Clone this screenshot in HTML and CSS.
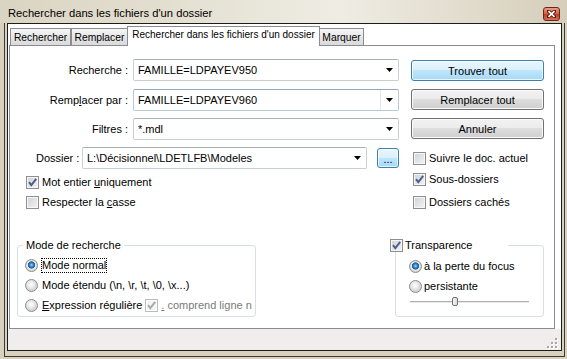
FILE: index.html
```html
<!DOCTYPE html>
<html lang="fr">
<head>
<meta charset="utf-8">
<title>Rechercher dans les fichiers d'un dossier</title>
<link rel="stylesheet" href="styles.css">
</head>
<body>
<div class="titlebar">
  <span class="title">Rechercher dans les fichiers d'un dossier</span>
  <span class="close"><svg width="9" height="8" viewBox="0 0 9 8"><path d="M1.5 1.2L7.5 6.8M7.5 1.2L1.5 6.8" stroke="#5a1a10" stroke-width="3.4" stroke-linecap="square"/><path d="M1.5 1.2L7.5 6.8M7.5 1.2L1.5 6.8" stroke="#fff" stroke-width="1.7"/></svg></span>
</div>
<div class="frame">
  <div class="client">
    <div class="tabs">
      <div class="tab t1">Rechercher</div>
      <div class="tab t2">Remplacer</div>
      <div class="tab active">Rechercher dans les fichiers d'un dossier</div>
      <div class="tab t4">Marquer</div>
    </div>
    <div class="panel">
      <div class="top">
        <div class="left">
          <div class="row r1">
            <span class="lbl">Recherche :</span>
            <div class="combo wide"><span>FAMILLE=LDPAYEV950</span><svg class="arrow" width="7" height="4" viewBox="0 0 7 4"><path d="M0 0H7L3.5 4z"/></svg></div>
          </div>
          <div class="row r2">
            <span class="lbl">Remp<u>l</u>acer par :</span>
            <div class="combo wide hover"><span>FAMILLE=LDPAYEV960</span><span class="sep"></span><svg class="arrow" width="7" height="4" viewBox="0 0 7 4"><path d="M0 0H7L3.5 4z"/></svg></div>
          </div>
          <div class="row r3">
            <span class="lbl">Filtres :</span>
            <div class="combo wide"><span>*.mdl</span><svg class="arrow" width="7" height="4" viewBox="0 0 7 4"><path d="M0 0H7L3.5 4z"/></svg></div>
          </div>
          <div class="row r4">
            <span class="lbl2">Dossier :</span>
            <div class="combo folder"><span>L:\Décisionnel\LDETLFB\Modeles</span><svg class="arrow" width="7" height="4" viewBox="0 0 7 4"><path d="M0 0H7L3.5 4z"/></svg></div>
            <span class="browse">...</span>
          </div>
          <div class="chk c1"><span class="cb"><svg width="11" height="11" viewBox="0 0 11 11"><path d="M2 5.2L4.3 8.2L9.2 1.8" fill="none" stroke="#4a5d8f" stroke-width="1.9"/></svg></span><span>Mot entier <u>u</u>niquement</span></div>
          <div class="chk c2"><span class="cb"></span><span>Respecter la <u>c</u>asse</span></div>
        </div>
        <div class="right">
          <div class="btn focus b1">Trouver tout</div>
          <div class="btn b2">Remplacer tout</div>
          <div class="btn b3">Annuler</div>
          <div class="chk rc1"><span class="cb"></span><span>Suivre le doc. actuel</span></div>
          <div class="chk rc2"><span class="cb"><svg width="11" height="11" viewBox="0 0 11 11"><path d="M2 5.2L4.3 8.2L9.2 1.8" fill="none" stroke="#4a5d8f" stroke-width="1.9"/></svg></span><span>Sous-dossiers</span></div>
          <div class="chk rc3"><span class="cb"></span><span>Dossiers cachés</span></div>
        </div>
      </div>
      <div class="bottom">
        <fieldset class="grp mode">
          <legend>Mode de recherche</legend>
          <div class="opt o1"><span class="rb on"></span><span class="focusbox">Mode normal</span></div>
          <div class="opt o2"><span class="rb"></span><span>Mode étendu (\n, \r, \t, \0, \x...)</span></div>
          <div class="opt o3"><span class="rb"></span><span class="regex"><u>E</u>xpression régulière</span><span class="cb dis"><svg width="11" height="11" viewBox="0 0 11 11"><path d="M2 5.2L4.3 8.2L9.2 1.8" fill="none" stroke="#a9a9a9" stroke-width="1.9"/></svg></span><span class="distext"><u>.</u> comprend ligne n</span></div>
        </fieldset>
        <fieldset class="grp transp">
          <legend><span class="cb"><svg width="11" height="11" viewBox="0 0 11 11"><path d="M2 5.2L4.3 8.2L9.2 1.8" fill="none" stroke="#4a5d8f" stroke-width="1.9"/></svg></span><span>Transparence</span></legend>
          <div class="opt t1o"><span class="rb on"></span><span>à la perte du focus</span></div>
          <div class="opt t2o"><span class="rb"></span><span>persistante</span></div>
          <div class="slider"><span class="track"></span><span class="thumb"></span></div>
        </fieldset>
      </div>
    </div>
    <div class="status">
      <svg class="grip" width="11" height="11" viewBox="0 0 11 11">
        <g fill="#fff"><rect x="9" y="1" width="2" height="2"/><rect x="5" y="5" width="2" height="2"/><rect x="9" y="5" width="2" height="2"/><rect x="1" y="9" width="2" height="2"/><rect x="5" y="9" width="2" height="2"/><rect x="9" y="9" width="2" height="2"/></g>
        <g fill="#aaa6a6"><rect x="8" y="0" width="2" height="2"/><rect x="4" y="4" width="2" height="2"/><rect x="8" y="4" width="2" height="2"/><rect x="0" y="8" width="2" height="2"/><rect x="4" y="8" width="2" height="2"/><rect x="8" y="8" width="2" height="2"/></g>
      </svg>
    </div>
  </div>
</div>
</body>
</html>
```
FILE: styles.css
```css
* { box-sizing: border-box; }
body {
  margin: 0;
  width: 567px;
  height: 359px;
  overflow: hidden;
  background: #d8d1bd;
  font-family: "Liberation Sans", Arial, sans-serif;
  font-size: 11px;
  line-height: 14px;
  color: #000;
}
u { text-decoration: underline; text-underline-offset: 1px; }

.titlebar {
  height: 23px;
  display: flex;
  background: linear-gradient(to right, #dad4c2 0%, #e3dfd0 30%, #efece4 60%, #e4dfd1 78%, #d5cebb 100%);
}
.title {
  font-size: 11.2px;
  line-height: 18px;
  padding: 4px 0 0 8px;
  white-space: nowrap;
}
.close {
  margin: 7px 7px 0 auto;
  width: 17px;
  height: 14px;
  border: 1px solid #6e2416;
  border-radius: 3px;
  background: linear-gradient(#e8a08b, #d65d41 48%, #c23c20 52%, #d9714f);
  display: flex;
  align-items: center;
  justify-content: center;
}

.frame {
  margin-left: 4px;
  width: 561px;
  height: 334px;
  border: 1px solid #3a3a3a;
  border-top: 0;
  padding: 0 2px 5px 2px;
}
.client {
  width: 555px;
  height: 328px;
  border: 1px solid #1c1c1c;
  background: #fff;
  display: flex;
  flex-direction: column;
}

/* tabs */
.tabs {
  height: 21px;
  display: flex;
  align-items: flex-end;
  padding: 2px 0 0 2px;
}
.tab {
  height: 17px;
  border: 1px solid #898c95;
  border-bottom: 0;
  background: linear-gradient(#f6f6f6, #e6e6e6 50%, #dadada);
  text-align: center;
  padding-top: 2px;
  white-space: nowrap;
  font-size: 10.3px;
  overflow: hidden;
}
.t1 { width: 61px; }
.t2 { width: 57px; }
.tab.active {
  width: 193px;
  height: 20px;
  margin-left: -1px;
  margin-bottom: -1px;
  background: #fff;
  position: relative;
  z-index: 1;
  padding-top: 1px;
  font-size: 10px;
}
.t4 { width: 45px; margin-left: -1px; }

.panel {
  margin-left: 1px;
  width: 546px;
  height: 284px;
  border: 1px solid #898c95;
  background: #fff;
}

.status {
  flex: 1;
  background: #f0eded;
  display: flex;
  justify-content: flex-end;
  align-items: flex-end;
  padding: 0 3px 1px 0;
}

/* top area */
.top { display: flex; margin-top: 13px; }
.left { width: 389px; }
.row { display: flex; align-items: center; height: 22px; }
.r2 { margin-top: 8px; }
.r3 { margin-top: 7px; }
.r4 { margin-top: 7px; padding-left: 26px; }
.lbl { width: 118px; text-align: right; margin-right: 5px; white-space: nowrap; }
.lbl2 { width: 46px; }

.combo {
  height: 22px;
  border: 1px solid #c9ced6;
  border-top-color: #abb0b8;
  border-radius: 2px;
  background: #fff;
  display: flex;
  align-items: center;
  padding: 0 5px 0 4px;
  white-space: nowrap;
}
.combo > span:first-child { flex: 1; overflow: hidden; }
.combo.wide { width: 266px; }
.combo.folder { width: 285px; }
.combo.hover { border-color: #b7c9db; border-top-color: #8fa7bf; }
.sep { width: 1px; height: 20px; background: #e3e8ee; margin-right: 5px; }
.arrow { display: block; flex: none; }

.browse {
  margin-left: 10px;
  width: 22px;
  height: 20px;
  border: 1px solid #3c7fb1;
  border-radius: 3px;
  background: linear-gradient(#eaf6fd, #d9f0fc 50%, #bee6fd 50%, #a7d9f5);
  box-shadow: inset 0 0 0 1px rgba(255,255,255,0.7);
  text-align: center;
  line-height: 14px;
  padding-top: 3px;
}

.chk { display: flex; align-items: center; height: 16px; white-space: nowrap; }
.chk .cb { margin-right: 3px; }
.c1 { margin-top: 5px; margin-left: 16px; }
.c2 { margin-top: 4px; margin-left: 16px; }

.cb {
  width: 13px;
  height: 13px;
  flex: none;
  border: 1px solid #8e8f8f;
  background: linear-gradient(135deg, #cfd2d6, #f3f3f3);
  box-shadow: inset 0 0 0 1px #f6f6f6;
  display: flex;
  align-items: center;
  justify-content: center;
}
.cb svg { display: block; }
.cb.dis {
  border-color: #bcbcbc;
  background: #f4f4f4;
  box-shadow: inset 0 0 0 1px #fff;
}

.right { margin-left: 12px; width: 133px; }
.btn {
  height: 21px;
  border: 1px solid #707070;
  border-radius: 3px;
  background: linear-gradient(#f2f2f2, #ebebeb 50%, #dddddd 50%, #cfcfcf);
  box-shadow: inset 0 0 0 1px #fbfbfb;
  text-align: center;
  padding-top: 3px;
}
.btn.focus {
  border-color: #3c7fb1;
  background: linear-gradient(#eaf6fd, #d9f0fc 50%, #bee6fd 50%, #a7d9f5);
  box-shadow: inset 0 0 0 1px rgba(255,255,255,0.75);
}
.b1 { margin-top: 1px; }
.b2 { margin-top: 8px; }
.b3 { margin-top: 8px; }
.rc1 { margin-top: 11px; margin-left: 2px; }
.rc2 { margin-top: 5px; margin-left: 2px; }
.rc3 { margin-top: 7px; margin-left: 2px; }

/* group boxes */
.bottom { display: flex; margin-top: 28px; margin-left: 7px; }
.grp {
  margin: 0;
  padding: 0 0 3px 0;
  min-width: 0;
  border: 1px solid #d5dfe5;
  border-radius: 3px;
}
.grp legend {
  height: 14px;
  line-height: 14px;
  white-space: nowrap;
}
.mode { width: 239px; }
.mode legend { margin-left: 5px; padding: 0 3px; }
.transp { width: 149px; margin-left: 139px; padding-bottom: 8px; }
.transp legend {
  margin-left: -6px;
  padding: 0;
  width: 118px;
  display: flex;
  align-items: center;
}
.transp legend .cb { margin-right: 2px; }

.opt { display: flex; align-items: center; height: 16px; white-space: nowrap; }
.mode .opt { margin-left: 7px; margin-right: 2px; overflow: hidden; }
.mode .opt .rb { margin-right: 4px; }
.o1 { margin-top: 5px; }
.o2, .o3 { margin-top: 4px; }
.focusbox { outline: 1px dotted #000; outline-offset: 0; line-height: 13px; }
.regex { flex: none; }
.o3 .cb { margin: 0 3px 0 3px; }
.distext { color: #7a7a7a; }

.transp .opt { margin-left: 13px; }
.transp .opt .rb { margin-right: 2px; }
.t1o { margin-top: 6px; }
.t2o { margin-top: 4px; }

.rb {
  width: 13px;
  height: 13px;
  flex: none;
  border-radius: 50%;
  border: 1px solid #8b8c8c;
  background: radial-gradient(circle at 45% 40%, #ffffff 0, #ececec 3px, #d2d2d2 6px);
}
.rb.on {
  background: radial-gradient(circle at 50% 45%, #a9dcfc 0, #3b91d8 1.6px, #1a5a93 3.3px, #e9e9e9 3.9px, #d4d4d4 6px);
}

.slider {
  position: relative;
  margin: 1px 0 0 14px;
  width: 119px;
  height: 13px;
  padding-top: 6px;
}
.track {
  display: block;
  height: 2px;
  border-top: 1px solid #b0b0b0;
  border-bottom: 1px solid #e8e8e8;
}
.thumb {
  position: absolute;
  left: 42px;
  top: 2px;
  width: 6px;
  height: 9px;
  border: 1px solid #707070;
  border-radius: 2px;
  background: linear-gradient(to right, #f4f4f4, #dcdcdc);
}
```
